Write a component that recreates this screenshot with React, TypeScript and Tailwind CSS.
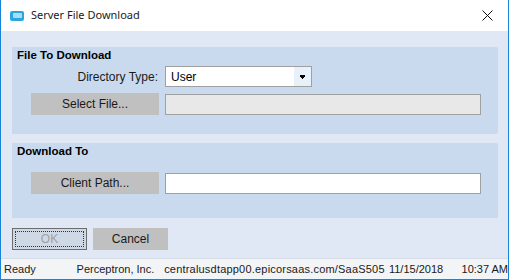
export default function App() {
  return (
    <div
      className="w-[509px] h-[280px] flex flex-col bg-white border border-t-0 border-[#1883d7] text-[12px] text-black overflow-hidden"
      style={{ fontFamily: '"Liberation Sans", Arial, sans-serif' }}
    >
      {/* Title bar */}
      <div className="h-[31px] flex items-center bg-white">
        <div className="ml-[9px] w-[14px] h-[10px] rounded-[2px] bg-[#2ca6e0] flex items-center justify-center">
          <div className="w-[9px] h-[5px] rounded-[1px] bg-[#a9dcf5]" />
        </div>
        <span
          className="ml-[7px] text-[11px] text-[#1a1a1a]"
          style={{ fontFamily: '"Noto Sans", "Open Sans", sans-serif' }}
        >
          Server File Download
        </span>
        <svg className="ml-auto mr-[15px]" width="11" height="11" viewBox="0 0 11 11">
          <path d="M0.5 0.5 L10.5 10.5 M10.5 0.5 L0.5 10.5" stroke="#111" strokeWidth="1" />
        </svg>
      </div>

      {/* Body */}
      <div className="flex-1 bg-[#dfe8f4] pt-[16px] px-[11px] flex flex-col">
        <div className="w-[486px] h-[87px] bg-[#c9daef] rounded-tr-[2px] rounded-br-[2px] pl-[5px] pt-[1px]">
          <div className="font-bold text-[11.5px] leading-[14px]">File To Download</div>
          <div className="flex items-center mt-[4px] h-[21px]">
            <div className="w-[141px] text-right text-[#1a1a1a]">Directory Type:</div>
            <div className="ml-[7px] w-[147px] h-[21px] border border-[#a0a0a0] bg-white flex items-center">
              <span className="pl-[5px] flex-1">User</span>
              <div className="w-[17px] h-full bg-[#e8f0fa] flex items-center justify-center">
                <svg width="5" height="4" viewBox="0 0 5 4">
                  <path d="M0 0 H5 V2 H4 V3 H3 V4 H2 V3 H1 V2 H0 Z" fill="#000" />
                </svg>
              </div>
            </div>
          </div>
          <div className="flex items-center mt-[6px]">
            <div className="ml-[14px] w-[128px] h-[22px] bg-[#c0c0c0] flex items-center justify-center text-[#1a1a1a]">
              Select File...
            </div>
            <div className="ml-[6px] w-[316px] h-[21px] border border-[#a0a0a0] bg-[#e8e8e8]" />
          </div>
        </div>

        <div className="mt-[9px] w-[486px] h-[75px] bg-[#c9daef] rounded-tr-[2px] rounded-br-[2px] pl-[5px] pt-[1px]">
          <div className="font-bold text-[11.5px] leading-[14px]">Download To</div>
          <div className="flex items-center mt-[14px]">
            <div className="ml-[14px] w-[128px] h-[22px] bg-[#c0c0c0] flex items-center justify-center text-[#1a1a1a]">
              Client Path...
            </div>
            <div className="ml-[6px] w-[316px] h-[21px] border border-[#a0a0a0] bg-white" />
          </div>
        </div>

        <div className="flex mt-[10px] gap-[6px]">
          <div className="w-[75px] h-[22px] border border-[#6d6d6d] bg-[#cfd9e6] p-[2px]">
            <div className="w-full h-full border border-dotted border-[#333] flex items-center justify-center text-[#a0a0a0]">
              OK
            </div>
          </div>
          <div className="w-[75px] h-[22px] bg-[#c0c0c0] flex items-center justify-center text-[#1a1a1a]">
            Cancel
          </div>
        </div>
      </div>

      {/* Status bar */}
      <div className="h-[21px] bg-[#f3f4f6] border-t border-[#d7dde6] flex items-center whitespace-nowrap text-[11px] text-[#1a1a1a]">
        <span className="ml-[3px] w-[73px]">Ready</span>
        <span className="w-[88px]">Perceptron, Inc.</span>
        <span className="w-[226px] tracking-[0.2px]">centralusdtapp00.epicorsaas.com/SaaS505</span>
        <span className="w-[73px]">11/15/2018</span>
        <span>10:37 AM</span>
      </div>
    </div>
  );
}
